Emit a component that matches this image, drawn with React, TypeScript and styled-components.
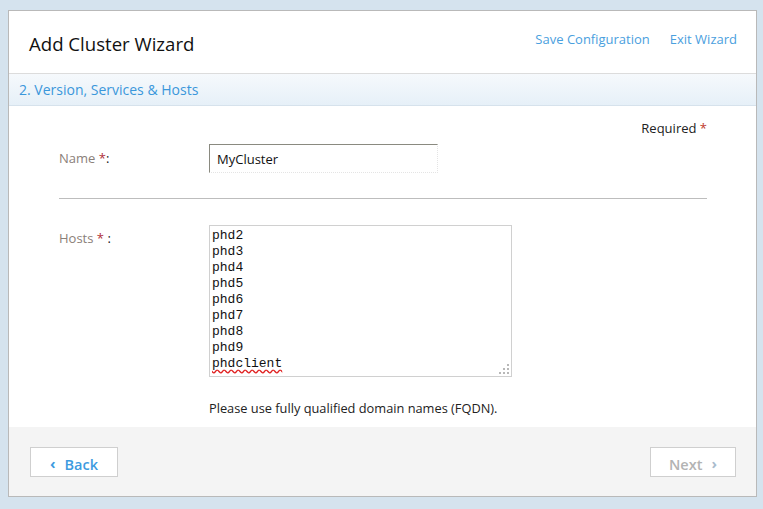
import React from "react";
import styled, { createGlobalStyle } from "styled-components";

const Global = createGlobalStyle`
  html, body { margin: 0; padding: 0; }
  body {
    background: #d5e3ee;
    font-family: "Open Sans", "Noto Sans", sans-serif;
    width: 763px;
    height: 509px;
    overflow: hidden;
  }
`;

const Page = styled.div`
  padding: 10px 6px 12px 8px;
`;

const Panel = styled.div`
  width: 747px;
  height: 485px;
  border: 1px solid #b9b9b9;
  background: #fff;
  display: flex;
  flex-direction: column;
`;

const Header = styled.div`
  height: 62px;
  border-bottom: 1px solid #dcdcdc;
  display: flex;
  align-items: center;
  justify-content: space-between;
  padding: 0 19px 0 20px;
  flex-shrink: 0;
`;

const Title = styled.h1`
  margin: 0;
  font-size: 18.6px;
  font-weight: 400;
  color: #111;
  padding-top: 2px;
`;

const Links = styled.div`
  display: flex;
  gap: 20px;
  padding-bottom: 6px;
`;

const Link = styled.a`
  color: #4aa0de;
  font-size: 13px;
  text-decoration: none;
`;

const StepBand = styled.div`
  height: 31px;
  border-bottom: 1px solid #d6e2ec;
  background: linear-gradient(#f6f9fc, #e6f0f8);
  display: flex;
  align-items: center;
  padding-left: 10px;
  color: #3b97db;
  font-size: 14px;
  flex-shrink: 0;
`;

const Body = styled.div`
  flex: 1;
  padding: 13px 49px 0 50px;
`;

const RequiredNote = styled.div`
  text-align: right;
  font-size: 13px;
  color: #222;
  height: 21px;
`;

const Star = styled.span`
  color: #c0392b;
`;

const Row = styled.div<{ $top: number }>`
  display: grid;
  grid-template-columns: 150px 1fr;
  align-items: start;
  margin-top: ${(p) => p.$top}px;
`;

const Label = styled.label<{ $pt: number }>`
  color: #8a8079;
  font-size: 13px;
  padding-top: ${(p) => p.$pt}px;
`;

const Colon = styled.span`
  color: #222;
`;

const LabelStar = styled.span`
  color: #b0303a;
`;

const TextInput = styled.div`
  width: 220px;
  height: 27px;
  border-top: 1px solid #8a8a80;
  border-left: 1px solid #8a8a80;
  border-right: 1px dotted #e4e4e4;
  border-bottom: 1px dotted #e4e4e4;
  padding-left: 7px;
  display: flex;
  align-items: center;
  font-size: 13px;
  color: #111;
`;

const Divider = styled.hr`
  border: 0;
  border-top: 1px solid #bdbdbd;
  margin: 25px 0 0 0;
`;

const HostsBox = styled.div`
  position: relative;
  width: 297px;
  height: 147px;
  border: 1px solid #d0d0d0;
  padding: 2px 2px 1px;
  font-family: "Liberation Mono", "Courier New", monospace;
  font-size: 13px;
  line-height: 16px;
  color: #111;
`;

const HostLine = styled.div<{ $misspelt?: boolean }>`
  text-decoration: ${(p) => (p.$misspelt ? "underline wavy #e02020" : "none")};
  text-decoration-skip-ink: none;
  text-underline-offset: 2px;
  width: fit-content;
`;

const Grip = styled.svg`
  position: absolute;
  right: 1px;
  bottom: 1px;
`;

const Hint = styled.div`
  margin: 22px 0 0 150px;
  font-size: 12.8px;
  color: #222;
`;

const Footer = styled.div`
  height: 69px;
  background: #f4f4f4;
  display: flex;
  justify-content: space-between;
  align-items: flex-start;
  padding: 20px 20px 0 21px;
  box-sizing: border-box;
  flex-shrink: 0;
`;

const NavButton = styled.button<{ $disabled?: boolean; $w: number }>`
  width: ${(p) => p.$w}px;
  height: 30px;
  background: #fff;
  border: 1px solid #cfcfcf;
  display: flex;
  align-items: center;
  justify-content: center;
  gap: 9px;
  font-family: "Open Sans", sans-serif;
  font-size: 14.5px;
  font-weight: 600;
  color: ${(p) => (p.$disabled ? "#b3b3b3" : "#3d9be0")};
  padding: 4px 0 0;
  cursor: pointer;
`;

const Chevron = styled.span<{ $color: string }>`
  color: ${(p) => p.$color};
  font-size: 15px;
  font-weight: 700;
  line-height: 1;
  margin-top: -2px;
`;

const hosts = ["phd2", "phd3", "phd4", "phd5", "phd6", "phd7", "phd8", "phd9", "phdclient"];

export default function App() {
  return (
    <>
      <Global />
      <Page>
        <Panel>
          <Header>
            <Title>Add Cluster Wizard</Title>
            <Links>
              <Link>Save Configuration</Link>
              <Link>Exit Wizard</Link>
            </Links>
          </Header>
          <StepBand>2. Version, Services &amp; Hosts</StepBand>
          <Body>
            <RequiredNote>
              Required <Star>*</Star>
            </RequiredNote>
            <Row $top={4}>
              <Label $pt={5}>
                Name <LabelStar>*</LabelStar>
                <Colon>:</Colon>
              </Label>
              <TextInput>MyCluster</TextInput>
            </Row>
            <Divider />
            <Row $top={26}>
              <Label $pt={4}>
                Hosts <LabelStar>*</LabelStar> <Colon>:</Colon>
              </Label>
              <HostsBox>
                {hosts.map((h) => (
                  <HostLine key={h} $misspelt={h === "phdclient"}>
                    {h}
                  </HostLine>
                ))}
                <Grip width="12" height="12" viewBox="0 0 12 12">
                  <g fill="#b8b8b8">
                    <rect x="9" y="1" width="2" height="2" />
                    <rect x="5" y="5" width="2" height="2" />
                    <rect x="9" y="5" width="2" height="2" />
                    <rect x="1" y="9" width="2" height="2" />
                    <rect x="5" y="9" width="2" height="2" />
                    <rect x="9" y="9" width="2" height="2" />
                  </g>
                </Grip>
              </HostsBox>
            </Row>
            <Hint>Please use fully qualified domain names (FQDN).</Hint>
          </Body>
          <Footer>
            <NavButton $w={88}>
              <Chevron $color="#3d9be0">‹</Chevron>
              Back
            </NavButton>
            <NavButton $w={86} $disabled>
              Next
              <Chevron $color="#a9bccd">›</Chevron>
            </NavButton>
          </Footer>
        </Panel>
      </Page>
    </>
  );
}
